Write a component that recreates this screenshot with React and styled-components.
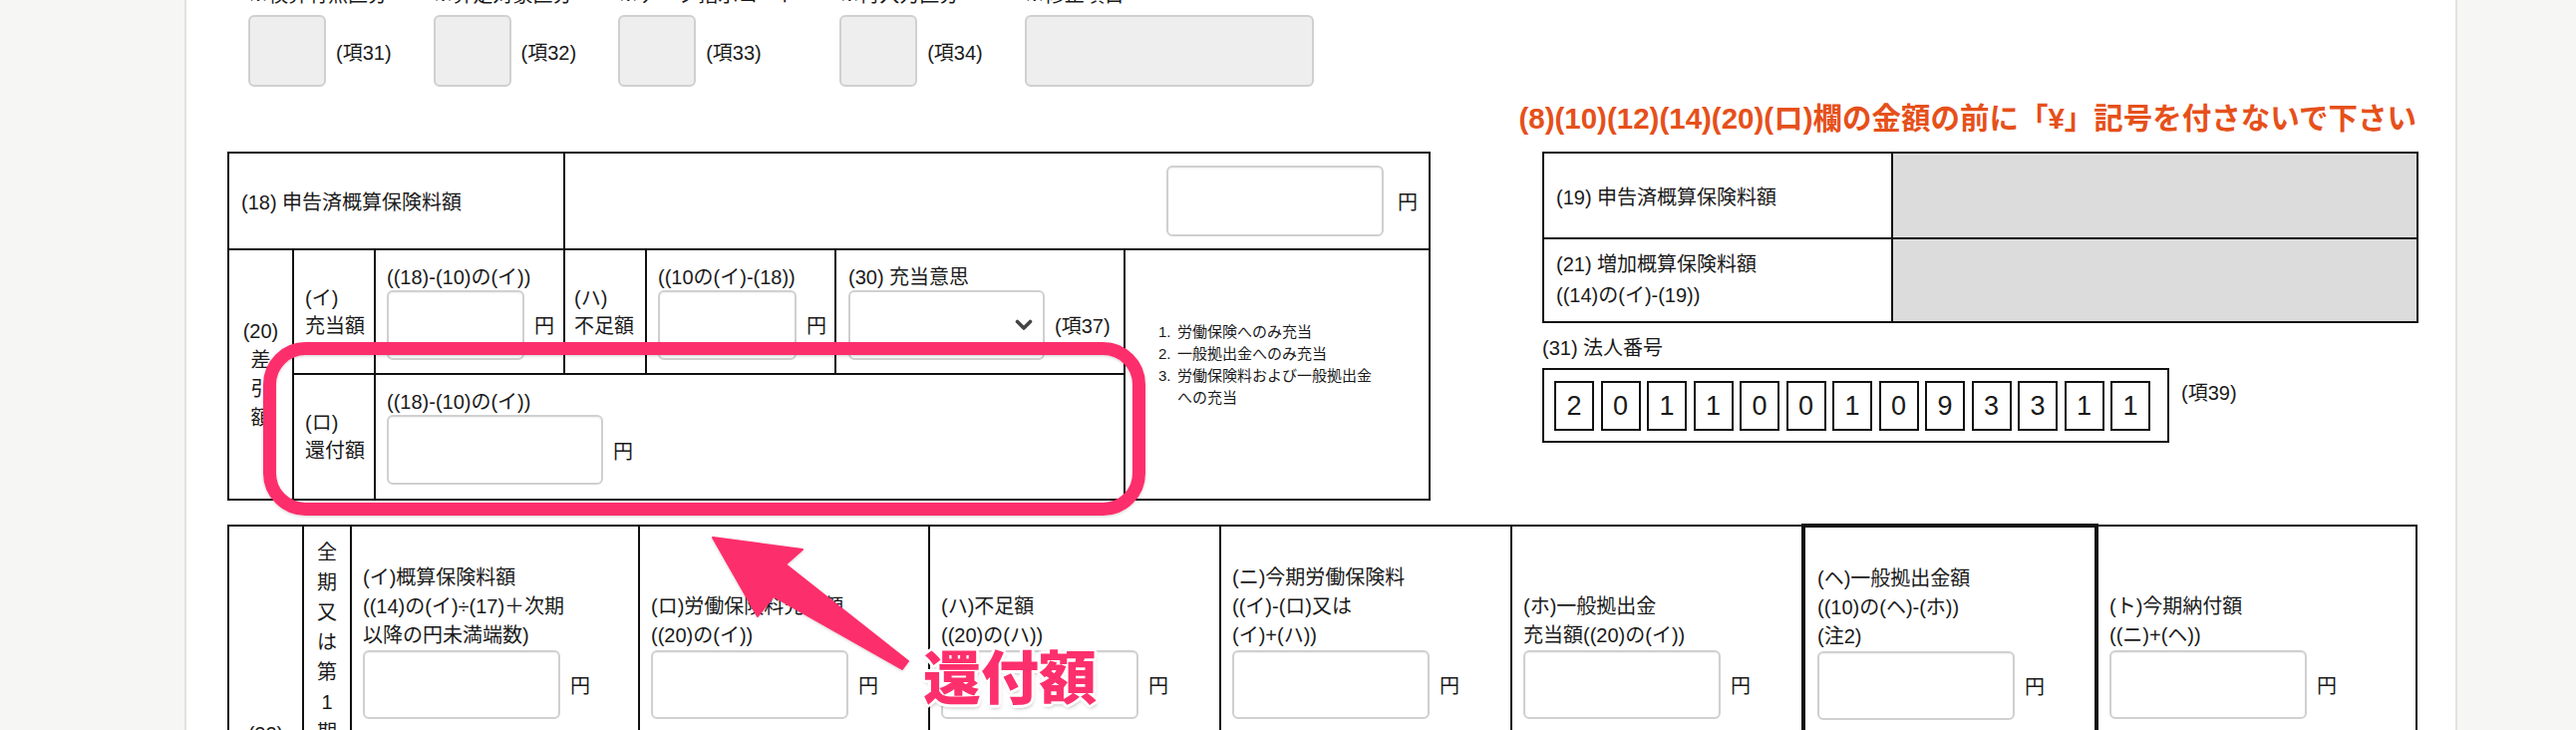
import React from "react";
import styled, { createGlobalStyle } from "styled-components";

const GlobalStyle = createGlobalStyle`
  html, body {
    margin: 0;
    padding: 0;
  }
  body {
    background: #f6f6f4;
    font-family: "Liberation Sans", "Noto Sans CJK JP", sans-serif;
    color: #1a1a1a;
    overflow: hidden;
  }
`;

const Page = styled.div`
  position: relative;
  display: flex;
  min-height: 732px;
`;

const Side = styled.div`
  width: 185px;
  flex-shrink: 0;
  background: #f6f6f4;
`;

const Panel = styled.main`
  width: 2280px;
  flex-shrink: 0;
  box-sizing: border-box;
  background: #fff;
  border-left: 2px solid #e2e2e0;
  border-right: 2px solid #e2e2e0;
  padding: 0 39px 40px 41px;
`;

const TopRow = styled.div`
  display: flex;
  gap: 42px;
  margin-top: -17px;
  padding-left: 21px;
`;

const Field = styled.div`
  display: flex;
  flex-direction: column;
`;

const FieldLabel = styled.div`
  font-size: 20px;
  line-height: 24px;
  margin-bottom: 8px;
  white-space: nowrap;
`;

const FieldBody = styled.div`
  display: flex;
  align-items: center;
  gap: 10px;
  font-size: 20px;
`;

const GrayBox = styled.div`
  width: ${(p) => p.$w}px;
  height: 72px;
  box-sizing: border-box;
  background: #eeeeee;
  border: 2px solid #d0d0d0;
  border-radius: 6px;
`;

const Notice = styled.p`
  margin: 14px 0 0;
  text-align: right;
  color: #e6501a;
  font-weight: bold;
  font-size: 29.5px;
  line-height: 35px;
  white-space: nowrap;
`;

const Section = styled.div`
  display: flex;
  justify-content: space-between;
  align-items: flex-start;
  margin-top: 16px;
`;

const Grid = styled.table`
  border-collapse: collapse;
  table-layout: fixed;
  width: ${(p) => p.$w}px;
  font-size: 20px;
  margin-top: ${(p) => p.$mt || 0}px;
`;

const Col = styled.col`
  width: ${(p) => p.$w}px;
`;

const Cell = styled.td`
  border: ${(p) => (p.$thick ? 4 : 2)}px solid #111;
  height: ${(p) => (p.$h ? `${p.$h}px` : "auto")};
  padding: 0 0 0 ${(p) => (p.$pl != null ? p.$pl : 11)}px;
  vertical-align: ${(p) => p.$va || "middle"};
  text-align: ${(p) => p.$ta || "left"};
  background: ${(p) => (p.$gray ? "#dcdcdc" : "#fff")};
  white-space: nowrap;
`;

const Lines = styled.div`
  line-height: ${(p) => p.$lh || 28}px;
`;

const Stack = styled.div`
  display: flex;
  flex-direction: column;
  align-items: flex-start;
`;

const Caption = styled.div`
  line-height: 26px;
`;

const TallCaption = styled.div`
  display: flex;
  flex-direction: column;
  justify-content: flex-end;
  height: 88px;
  line-height: 29px;
`;

const AmountRow = styled.div`
  display: inline-flex;
  align-items: center;
  gap: ${(p) => p.$gap || 10}px;
`;

const AmountInput = styled.input`
  width: ${(p) => p.$w}px;
  height: ${(p) => p.$h || 70}px;
  box-sizing: border-box;
  border: 2px solid #d0d0d0;
  border-radius: 6px;
  background: #fff;
  box-shadow: inset 0 1px 2px rgba(0, 0, 0, 0.06);
  padding: 0 10px;
  font-size: 20px;
  outline: none;
`;

const Yen = styled.span`
  font-size: 20px;
`;

const SelectBox = styled.div`
  width: 197px;
  height: 70px;
  box-sizing: border-box;
  border: 2px solid #d0d0d0;
  border-radius: 6px;
  display: flex;
  align-items: center;
  justify-content: flex-end;
  padding-right: 10px;
`;

const NoteList = styled.div`
  font-size: 15px;
  line-height: 22px;
  padding-left: 33px;
  padding-bottom: 20px;
`;

const NoteItem = styled.div`
  display: flex;
`;

const NoteNum = styled.span`
  width: 19px;
  flex-shrink: 0;
`;

const VText = styled.div`
  display: flex;
  flex-direction: column;
  align-items: center;
  line-height: ${(p) => p.$lh || 30}px;
  padding-top: ${(p) => p.$pt || 0}px;
`;

const RightCol = styled.div`
  width: 877px;
  display: flex;
  flex-direction: column;
`;

const SubLabel = styled.div`
  font-size: 20px;
  line-height: 30px;
  margin-top: 10px;
`;

const NumberRow = styled.div`
  display: flex;
  align-items: flex-start;
  gap: 12px;
  margin-top: 5px;
`;

const NumberBox = styled.div`
  display: flex;
  gap: 6.5px;
  border: 2px solid #111;
  padding: 11px 17px 10px 10px;
`;

const Digit = styled.div`
  width: 40px;
  height: 50px;
  box-sizing: border-box;
  border: 2px solid #111;
  display: flex;
  align-items: center;
  justify-content: center;
  font-size: 27px;
`;

const ItemNo = styled.span`
  font-size: 20px;
  line-height: 30px;
  margin-top: 10px;
`;

const Overlay = styled.svg`
  position: absolute;
  left: 0;
  top: 0;
  pointer-events: none;
`;

const Callout = styled.div`
  position: absolute;
  left: 926px;
  top: 646px;
  font-family: "Noto Sans CJK JP", sans-serif;
  font-weight: 900;
  font-size: 58px;
  line-height: 60px;
  color: #fd2f6c;
  white-space: nowrap;
  text-shadow: -3px 0 0 #fff, 3px 0 0 #fff, 0 -3px 0 #fff, 0 3px 0 #fff,
    -2px -2px 0 #fff, 2px 2px 0 #fff, -2px 2px 0 #fff, 2px -2px 0 #fff,
    1px 3px 4px rgba(0, 0, 0, 0.35);
`;

const Amount = ({ w, h, gap }) => (
  <AmountRow $gap={gap}>
    <AmountInput $w={w} $h={h} readOnly />
    <Yen>円</Yen>
  </AmountRow>
);

const topFields = [
  { label: "※検算有無区分", w: 78, no: "(項31)" },
  { label: "※算定対象区分", w: 78, no: "(項32)" },
  { label: "※データ指示コード", w: 78, no: "(項33)" },
  { label: "※再入力区分", w: 78, no: "(項34)" },
  { label: "※修正項目", w: 290 },
];

const corpNo = "2011001093311";

const periodCols = [
  { lines: ["(イ)概算保険料額", "((14)の(イ)÷(17)＋次期", "以降の円未満端数)"] },
  { lines: ["(ロ)労働保険料充当額", "((20)の(イ))"] },
  { lines: ["(ハ)不足額", "((20)の(ハ))"] },
  { lines: ["(ニ)今期労働保険料", "((イ)-(ロ)又は", "(イ)+(ハ))"] },
  { lines: ["(ホ)一般拠出金", "充当額((20)の(イ))"] },
  { lines: ["(ヘ)一般拠出金額", "((10)の(ヘ)-(ホ))", "(注2)"], thick: true },
  { lines: ["(ト)今期納付額", "((ニ)+(ヘ))"] },
];

export default function App() {
  return (
    <Page>
      <GlobalStyle />
      <Side />
      <Panel>
        <TopRow>
          {topFields.map((f) => (
            <Field key={f.label}>
              <FieldLabel>{f.label}</FieldLabel>
              <FieldBody>
                <GrayBox $w={f.w} />
                {f.no && <span>{f.no}</span>}
              </FieldBody>
            </Field>
          ))}
        </TopRow>

        <Notice>(8)(10)(12)(14)(20)(ロ)欄の金額の前に「¥」記号を付さないで下さい</Notice>

        <Section>
          <Grid $w={1205}>
            <colgroup>
              <Col $w={65} />
              <Col $w={82} />
              <Col $w={190} />
              <Col $w={82} />
              <Col $w={190} />
              <Col $w={290} />
              <Col $w={306} />
            </colgroup>
            <tbody>
              <tr>
                <Cell colSpan={3} $h={95} $pl={12}>(18) 申告済概算保険料額</Cell>
                <Cell colSpan={4} $ta="right" $pl={0} style={{ paddingRight: 11 }}>
                  <Amount w={218} h={71} gap={14} />
                </Cell>
              </tr>
              <tr>
                <Cell rowSpan={2} $pl={0} $ta="center">
                  <VText $lh={29}>
                    <span>(20)</span>
                    <span>差</span>
                    <span>引</span>
                    <span>額</span>
                  </VText>
                </Cell>
                <Cell $h={123}>
                  <Lines>(イ)<br />充当額</Lines>
                </Cell>
                <Cell>
                  <Stack>
                    <Caption>((18)-(10)の(イ))</Caption>
                    <Amount w={138} />
                  </Stack>
                </Cell>
                <Cell $pl={9}>
                  <Lines>(ハ)<br />不足額</Lines>
                </Cell>
                <Cell>
                  <Stack>
                    <Caption>((10の(イ)-(18))</Caption>
                    <Amount w={139} />
                  </Stack>
                </Cell>
                <Cell $pl={12}>
                  <Stack>
                    <Caption>(30) 充当意思</Caption>
                    <AmountRow>
                      <SelectBox>
                        <svg width="18" height="12" viewBox="0 0 18 12">
                          <path d="M2.5 2.5 L9 9 L15.5 2.5" stroke="#444" strokeWidth="3.6" fill="none" strokeLinecap="round" strokeLinejoin="round" />
                        </svg>
                      </SelectBox>
                      <Yen>(項37)</Yen>
                    </AmountRow>
                  </Stack>
                </Cell>
                <Cell rowSpan={2} $pl={0}>
                  <NoteList>
                    <NoteItem><NoteNum>1.</NoteNum><span>労働保険へのみ充当</span></NoteItem>
                    <NoteItem><NoteNum>2.</NoteNum><span>一般拠出金へのみ充当</span></NoteItem>
                    <NoteItem><NoteNum>3.</NoteNum><span>労働保険料および一般拠出金<br />への充当</span></NoteItem>
                  </NoteList>
                </Cell>
              </tr>
              <tr>
                <Cell $h={124}>
                  <Lines>(ロ)<br />還付額</Lines>
                </Cell>
                <Cell colSpan={4}>
                  <Stack>
                    <Caption>((18)-(10)の(イ))</Caption>
                    <Amount w={217} />
                  </Stack>
                </Cell>
              </tr>
            </tbody>
          </Grid>

          <RightCol>
            <Grid $w={877}>
              <colgroup>
                <Col $w={350} />
                <Col $w={527} />
              </colgroup>
              <tbody>
                <tr>
                  <Cell $h={84} $pl={12}>(19) 申告済概算保険料額</Cell>
                  <Cell $gray />
                </tr>
                <tr>
                  <Cell $h={82} $pl={12}>
                    <Lines $lh={31}>(21) 増加概算保険料額<br />((14)の(イ)-(19))</Lines>
                  </Cell>
                  <Cell $gray />
                </tr>
              </tbody>
            </Grid>
            <SubLabel>(31) 法人番号</SubLabel>
            <NumberRow>
              <NumberBox>
                {corpNo.split("").map((d, i) => (
                  <Digit key={i}>{d}</Digit>
                ))}
              </NumberBox>
              <ItemNo>(項39)</ItemNo>
            </NumberRow>
          </RightCol>
        </Section>

        <Grid $w={2195} $mt={23}>
          <colgroup>
            <Col $w={75} />
            <Col $w={48} />
            <Col $w={289} />
            <Col $w={291} />
            <Col $w={292} />
            <Col $w={292} />
            <Col $w={293} />
            <Col $w={294} />
            <Col $w={321} />
          </colgroup>
          <tbody>
            <tr>
              <Cell $h={416} $pl={0} $ta="center">(22)</Cell>
              <Cell $pl={0} $va="top">
                <VText $pt={11}>
                  {"全期又は第1期(初期)".split("").map((c, i) => (
                    <span key={i}>{c}</span>
                  ))}
                </VText>
              </Cell>
              {periodCols.map((c, i) => (
                <Cell key={i} $va="top" $thick={c.thick} $pl={c.thick ? 12 : 11} style={{ paddingTop: 36 }}>
                  <Stack>
                    <TallCaption>
                      {c.lines.map((l) => (
                        <span key={l}>{l}</span>
                      ))}
                    </TallCaption>
                    <Amount w={198} h={69} />
                  </Stack>
                </Cell>
              ))}
            </tr>
          </tbody>
        </Grid>
      </Panel>
      <Side />

      <Overlay width="2584" height="732" viewBox="0 0 2584 732">
        <defs>
          <filter id="soft" x="-10%" y="-10%" width="120%" height="120%">
            <feDropShadow dx="0" dy="1" stdDeviation="1.5" floodColor="#000" floodOpacity="0.18" />
          </filter>
        </defs>
        <rect x="270.5" y="349.5" width="872" height="161" rx="36" fill="none" stroke="#fd2f6c" strokeWidth="13" filter="url(#soft)" />
        <polygon
          points="715,539 805,551 788,566 911,663 905,671 776,598 760,618"
          fill="#fd2f6c"
          stroke="#fd2f6c"
          strokeWidth="2"
          strokeLinejoin="round"
          filter="url(#soft)"
        />
      </Overlay>
      <Callout>還付額</Callout>
    </Page>
  );
}
